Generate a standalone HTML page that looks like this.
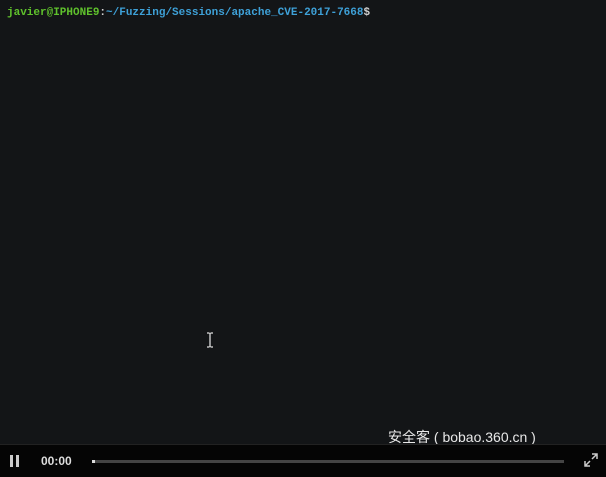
<!DOCTYPE html>
<html><head><meta charset="utf-8"><style>
html,body{margin:0;padding:0;width:606px;height:476px;overflow:hidden;background:#131517;}
.t{position:absolute;left:7px;top:7px;font:bold 11px "Liberation Mono",monospace;white-space:pre;}
.g{color:#5fc12c}.b{color:#3ea1d8}.w{color:#d0d0d0}
.bar{position:absolute;left:0;top:444px;width:606px;height:32px;background:#050505;border-top:1px solid #222;}
.wm{position:absolute;left:388px;top:427px;color:#e8e8e8;font:14px "Liberation Sans","Noto Sans CJK SC",sans-serif;white-space:pre;}
</style></head><body>
<div class="t"><span class="g">javier@IPHONE9</span><span class="w">:</span><span class="b">~/Fuzzing/Sessions/apache_CVE-2017-7668</span><span class="w">$</span></div>
<svg style="position:absolute;left:205px;top:332px" width="10" height="16"><path d="M2 1h2.5M5.5 1h2.5M5 1v14M2 15h2.5M5.5 15h2.5" stroke="#ddd" stroke-width="1.3" fill="none"/></svg>
<div class="wm">安全客 ( bobao.360.cn )</div>
<div class="bar">
<div style="position:absolute;left:10px;top:10px;width:3px;height:12px;background:#ccc"></div>
<div style="position:absolute;left:16px;top:10px;width:3px;height:12px;background:#ccc"></div>
<div style="position:absolute;left:41px;top:9px;color:#ddd;font:bold 12px 'Liberation Sans',sans-serif">00:00</div>
<div style="position:absolute;left:92px;top:15px;width:472px;height:3px;background:#444"></div>
<div style="position:absolute;left:92px;top:15px;width:3px;height:3px;background:#ddd"></div>
<svg style="position:absolute;left:583px;top:7px" width="16" height="16"><path d="M9 2h5v5M14 2l-5 5M2 9v5h5M2 14l5-5" stroke="#ccc" stroke-width="1.5" fill="none"/></svg>
</div>
</body></html>
